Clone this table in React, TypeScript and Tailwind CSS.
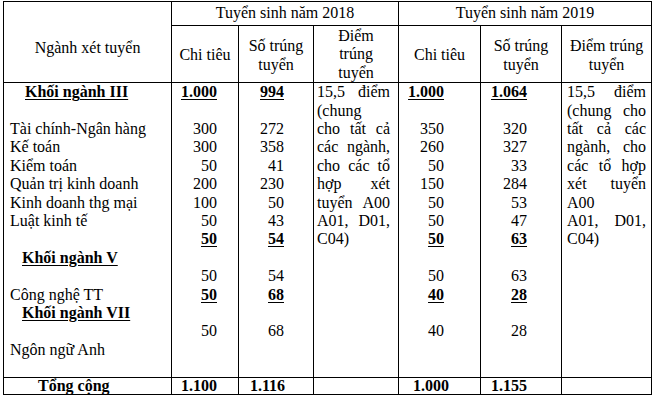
import React from "react";

type Line = { t: string; b?: boolean; pl?: string };

const blank: Line = { t: "" };

// lines of the big body row, one entry per printed line
const nganh: Line[] = [
  { t: "Khối ngành III", b: true, pl: "pl-[15px]" },
  blank,
  { t: "Tài chính-Ngân hàng" },
  { t: "Kế toán" },
  { t: "Kiểm toán" },
  { t: "Quản trị kinh doanh" },
  { t: "Kinh doanh thg mại" },
  { t: "Luật kinh tế" },
  blank,
  { t: "Khối ngành V", b: true, pl: "pl-[12px]" },
  blank,
  { t: "Công nghệ TT" },
  { t: "Khối ngành VII", b: true, pl: "pl-[12px]" },
  blank,
  { t: "Ngôn ngữ Anh" },
  blank,
];

const nums = (a: (string | number)[], bold: number[]): Line[] =>
  a.map((v, i) => ({ t: String(v), b: bold.includes(i) }));

const boldRows = [0, 8, 11];
const chiTieu2018 = nums(["1.000", "", 300, 300, 50, 200, 100, 50, 50, "", 50, 50, "", 50, "", ""], boldRows);
const so2018 = nums(["994", "", 272, 358, 41, 230, 50, 43, 54, "", 54, 68, "", 68, "", ""], boldRows);
const chiTieu2019 = nums(["1.000", "", 350, 260, 50, 150, 50, 50, 50, "", 50, 40, "", 40, "", ""], boldRows);
const so2019 = nums(["1.064", "", 320, 327, 33, 284, 53, 47, 63, "", 63, 28, "", 28, "", ""], boldRows);

const diem2018 = ["15,5 điểm", "(chung", "cho tất cả", "các ngành,", "cho các tổ", "hợp xét", "tuyển A00", "A01, D01,", "C04)"];
const diem2019 = ["15,5 điểm", "(chung cho", "tất cả các", "ngành, cho", "các tổ hợp", "xét tuyển", "A00", "A01, D01,", "C04)"];

const Lines = ({ lines, className }: { lines: Line[]; className?: string }) => (
  <div className={className}>
    {lines.map((l, i) => (
      <div key={i} className={`h-[18.4px] whitespace-nowrap ${l.pl ?? ""}`}>
        {l.t ? (
          <span className={l.b ? "font-bold underline underline-offset-[2px]" : ""}>{l.t}</span>
        ) : (
          "\u00a0"
        )}
      </div>
    ))}
  </div>
);

const Para = ({ lines, className }: { lines: string[]; className?: string }) => (
  <div className={className}>
    {lines.map((l, i) => (
      <div
        key={i}
        className={i === lines.length - 1 ? "h-[18.4px]" : "h-[18.4px] text-justify [text-align-last:justify]"}
      >
        {l}
      </div>
    ))}
  </div>
);

const td = "border border-black p-0";

export default function App() {
  return (
    <div className="w-[654px] h-[400px] bg-white text-black font-['Liberation_Serif','Times_New_Roman',serif] text-[16px] leading-[18.4px] pt-px pl-[3px]">
      <table className="border-collapse table-fixed w-[649px]">
        <colgroup>
          <col className="w-[168px]" />
          <col className="w-[67px]" />
          <col className="w-[75px]" />
          <col className="w-[85px]" />
          <col className="w-[82px]" />
          <col className="w-[81px]" />
          <col className="w-[90px]" />
        </colgroup>
        <thead>
          <tr className="h-[24px]">
            <th rowSpan={2} className={`${td} font-normal align-middle text-center pt-3`}>
              Ngành xét tuyển
            </th>
            <th colSpan={3} className={`${td} font-normal text-center`}>
              Tuyển sinh năm 2018
            </th>
            <th colSpan={3} className={`${td} font-normal text-center`}>
              Tuyển sinh năm 2019
            </th>
          </tr>
          <tr className="h-[57px]">
            <th className={`${td} font-normal text-center pt-[3px]`}>Chi tiêu</th>
            <th className={`${td} font-normal text-center pt-[3px]`}>
              Số trúng
              <br />
              tuyển
            </th>
            <th className={`${td} font-normal text-center pt-[1px]`}>
              Điểm
              <br />
              trúng
              <br />
              tuyển
            </th>
            <th className={`${td} font-normal text-center pt-[3px]`}>Chi tiêu</th>
            <th className={`${td} font-normal text-center pt-[3px]`}>
              Số trúng
              <br />
              tuyển
            </th>
            <th className={`${td} font-normal text-center pt-[3px]`}>
              Điểm trúng
              <br />
              tuyển
            </th>
          </tr>
        </thead>
        <tbody>
          <tr>
            <td className={`${td} align-top`}>
              <Lines lines={nganh} className="pl-[6px]" />
            </td>
            <td className={`${td} align-top`}>
              <Lines lines={chiTieu2018} className="text-right pr-[21px]" />
            </td>
            <td className={`${td} align-top`}>
              <Lines lines={so2018} className="text-right pr-[29px]" />
            </td>
            <td className={`${td} align-top`}>
              <Para lines={diem2018} className="pl-[3px] pr-[8px]" />
            </td>
            <td className={`${td} align-top`}>
              <Lines lines={chiTieu2019} className="text-right pr-[36px]" />
            </td>
            <td className={`${td} align-top`}>
              <Lines lines={so2019} className="text-right pr-[34px]" />
            </td>
            <td className={`${td} align-top`}>
              <Para lines={diem2019} className="pl-[5px] pr-[5px]" />
            </td>
          </tr>
          <tr className="h-[17px] font-bold leading-[16px]">
            <td className={`${td} pl-[34px]`}>Tổng cộng</td>
            <td className={`${td} text-right pr-[21px]`}>1.100</td>
            <td className={`${td} text-right pr-[28px]`}>1.116</td>
            <td className={td}></td>
            <td className={`${td} text-right pr-[31px]`}>1.000</td>
            <td className={`${td} text-right pr-[34px]`}>1.155</td>
            <td className={td}></td>
          </tr>
        </tbody>
      </table>
    </div>
  );
}
